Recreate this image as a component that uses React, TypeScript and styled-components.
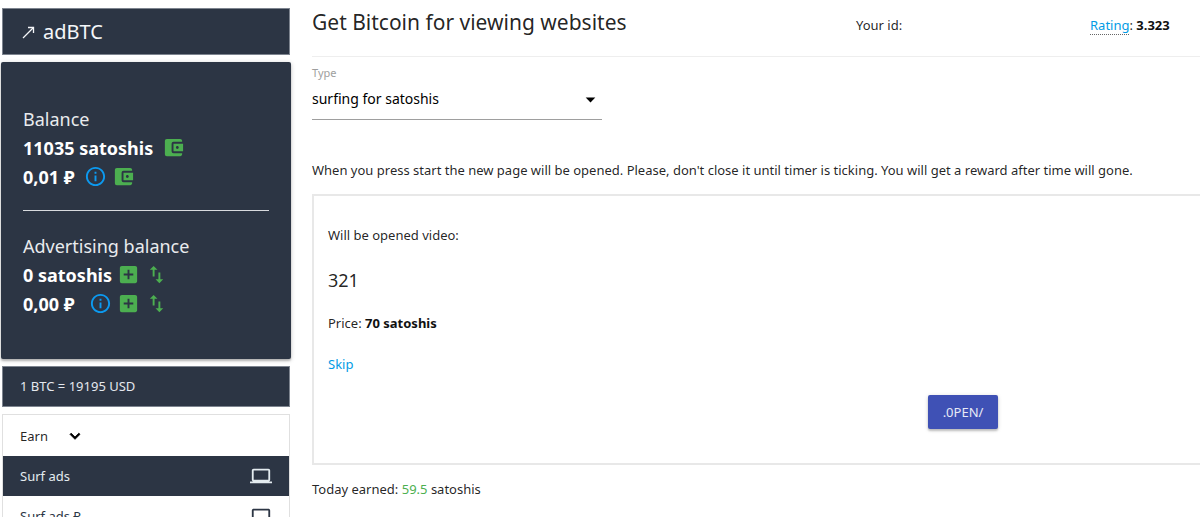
import React from "react";
import styled, { createGlobalStyle } from "styled-components";
import {
  MdAccountBalanceWallet,
  MdAddBox,
  MdArrowDropDown,
  MdExpandMore,
  MdImportExport,
  MdInfoOutline,
  MdLaptop,
} from "react-icons/md";

const navy = "#2c3544";
const green = "#4caf50";
const blue = "#039be5";

const GlobalStyle = createGlobalStyle`
  * { box-sizing: border-box; }
  body {
    margin: 0;
    background: #fff;
    color: rgba(0, 0, 0, 0.87);
    font-family: "Noto Sans", "Open Sans", sans-serif;
    font-size: 13px;
    line-height: 20px;
  }
  h1, h2, h3, p { margin: 0; padding: 0; font-weight: 400; }
  a { color: ${blue}; text-decoration: none; }
`;

const Page = styled.div`
  display: flex;
  gap: 21px;
  height: 100vh;
  overflow: hidden;
`;

const Sidebar = styled.aside`
  flex: 0 0 291px;
  display: flex;
  flex-direction: column;
  gap: 7px;
  padding: 8px 0 0 1px;
`;

const Panel = styled.div`
  flex: none;
  display: flex;
  align-items: center;
  margin: 0 1px;
  padding: 0 17px;
  border: 1px solid #7d848f;
  background: ${navy};
  color: #e4e8ee;
`;

const Logo = styled.a`
  display: flex;
  align-items: center;
  gap: 7px;
  height: 45px;
  color: #f5f7fa;
  font-size: 20px;
`;

const Rate = styled.p`
  line-height: 39px;
`;

const BalanceCard = styled.section`
  flex: none;
  padding: 43px 22px 41px;
  border-radius: 2px;
  background: ${navy};
  color: #fff;
  box-shadow: 0 2px 2px rgba(0, 0, 0, 0.2), 0 1px 5px rgba(0, 0, 0, 0.2);
`;

const BalanceTitle = styled.h2`
  color: #e9ebee;
  font-size: 18px;
  line-height: 28px;
`;

const BalanceRow = styled.div`
  display: flex;
  align-items: center;
  height: 29px;
  font-size: 18px;
  font-weight: 700;
`;

const IconLink = styled.a<{ $tone?: string; $gap?: number }>`
  display: flex;
  margin-left: ${(p) => p.$gap ?? 5}px;
  color: ${(p) => p.$tone ?? green};
  font-size: 23px;
`;

const Divider = styled.hr`
  margin: 19px 0 21px;
  border: 0;
  border-top: 1px solid #d8dade;
`;

const Menu = styled.nav`
  flex: none;
  margin: 0 1px;
  border: 1px solid #e0e0e0;
`;

const MenuToggle = styled.button`
  display: flex;
  align-items: center;
  gap: 17px;
  width: 100%;
  height: 41px;
  padding: 0 17px;
  border: 0;
  background: #fff;
  color: rgba(0, 0, 0, 0.87);
  font: inherit;

  svg { font-size: 20px; color: #000; }
  path:not([fill="none"]) { stroke: currentColor; stroke-width: 1; }
`;

const MenuLink = styled.a<{ $active?: boolean }>`
  display: flex;
  align-items: center;
  justify-content: space-between;
  height: 40px;
  padding: 0 17px;
  background: ${(p) => (p.$active ? navy : "#fff")};
  color: ${(p) => (p.$active ? "#e4ecf0" : navy)};

  svg { font-size: 22px; }
`;

const Main = styled.main`
  flex: 1;
  min-width: 0;
`;

const Header = styled.header`
  display: grid;
  grid-template-columns: 544fr 234fr 110fr;
  height: 57px;
  padding-top: 6px;
  border-bottom: 1px solid #eee;
`;

const Title = styled.h1`
  font-size: 21px;
  line-height: 32px;
`;

const HeaderItem = styled.p`
  padding-top: 9px;
  white-space: nowrap;
`;

const RatingLink = styled.a`
  border-bottom: 1px dotted #666;
`;

const Strong = styled.strong`
  color: #111;
  font-weight: 700;
`;

const Field = styled.div`
  width: 290px;
  padding-top: 8px;
`;

const FieldLabel = styled.label`
  display: block;
  color: #9e9e9e;
  font-size: 11px;
  line-height: 16px;
`;

const SelectBox = styled.div`
  display: grid;
  align-items: center;
  height: 39px;
  border-bottom: 1px solid #9e9e9e;

  > * { grid-area: 1 / 1; }
  svg { justify-self: end; margin-bottom: 2px; font-size: 23px; color: #000; pointer-events: none; }
`;

const Select = styled.select`
  width: 100%;
  height: 100%;
  padding: 0 0 2px;
  border: 0;
  appearance: none;
  background: transparent;
  color: #000;
  font: inherit;
  font-size: 14px;
`;

const Intro = styled.p`
  padding: 40px 0 14px;
  white-space: nowrap;
`;

const Offer = styled.section`
  display: flex;
  flex-direction: column;
  align-items: flex-start;
  min-height: 271px;
  padding: 29px 14px;
  border: 2px solid #e8e8e8;
  border-right: 0;
`;

const OfferTitle = styled.h3`
  padding: 20px 0 18px;
  font-size: 18px;
  line-height: 30px;
`;

const Skip = styled.a`
  margin: 21px 0;
`;

const OpenButton = styled.button`
  align-self: center;
  width: 70px;
  height: 34px;
  margin-left: 412px;
  padding: 0;
  border: 0;
  border-radius: 2px;
  background: #3f51b5;
  color: #e8eaf6;
  font: inherit;
  box-shadow: 0 2px 2px rgba(0, 0, 0, 0.18), 0 1px 4px rgba(0, 0, 0, 0.16);
`;

const Earned = styled.p`
  padding-top: 14px;

  span { color: ${green}; }
`;

export default function App() {
  return (
    <>
      <GlobalStyle />
      <Page>
        <Sidebar>
          <Panel>
            <Logo href="#">
              <svg width="16" height="16" viewBox="0 0 16 16" fill="none" stroke="currentColor" aria-hidden="true">
                <path d="M3 14L13.5 3.5" strokeWidth="1.3" />
                <path d="M8 3.5h5.5V9" strokeWidth="1.3" />
              </svg>
              adBTC
            </Logo>
          </Panel>
          <BalanceCard>
            <BalanceTitle>Balance</BalanceTitle>
            <BalanceRow>
              11035 satoshis
              <IconLink href="#" $gap={9} aria-label="Withdraw satoshis"><MdAccountBalanceWallet /></IconLink>
            </BalanceRow>
            <BalanceRow>
              0,01 ₽
              <IconLink href="#" $tone="#0c9af0" $gap={9} aria-label="Balance info"><MdInfoOutline /></IconLink>
              <IconLink href="#" aria-label="Withdraw rubles"><MdAccountBalanceWallet /></IconLink>
            </BalanceRow>
            <Divider />
            <BalanceTitle>Advertising balance</BalanceTitle>
            <BalanceRow>
              0 satoshis
              <IconLink href="#" aria-label="Add satoshis"><MdAddBox /></IconLink>
              <IconLink href="#" aria-label="Transfer satoshis"><MdImportExport /></IconLink>
            </BalanceRow>
            <BalanceRow>
              0,00 ₽
              <IconLink href="#" $tone="#0c9af0" $gap={14} aria-label="Advertising balance info"><MdInfoOutline /></IconLink>
              <IconLink href="#" aria-label="Add rubles"><MdAddBox /></IconLink>
              <IconLink href="#" aria-label="Transfer rubles"><MdImportExport /></IconLink>
            </BalanceRow>
          </BalanceCard>
          <Panel>
            <Rate>1 BTC = 19195 USD</Rate>
          </Panel>
          <Menu>
            <MenuToggle>Earn <MdExpandMore /></MenuToggle>
            <MenuLink href="#" $active>Surf ads <MdLaptop /></MenuLink>
            <MenuLink href="#">Surf ads ₽ <MdLaptop /></MenuLink>
          </Menu>
        </Sidebar>
        <Main>
          <Header>
            <Title>Get Bitcoin for viewing websites</Title>
            <HeaderItem>Your id:</HeaderItem>
            <HeaderItem><RatingLink href="#">Rating</RatingLink>: <Strong>3.323</Strong></HeaderItem>
          </Header>
          <Field>
            <FieldLabel htmlFor="type">Type</FieldLabel>
            <SelectBox>
              <Select id="type"><option>surfing for satoshis</option></Select>
              <MdArrowDropDown />
            </SelectBox>
          </Field>
          <Intro>
            When you press start the new page will be opened. Please, don't close it until timer is ticking. You will get a reward after time will gone.
          </Intro>
          <Offer>
            <p>Will be opened video:</p>
            <OfferTitle>321</OfferTitle>
            <p>Price: <Strong>70 satoshis</Strong></p>
            <Skip href="#">Skip</Skip>
            <OpenButton>.0PEN/</OpenButton>
          </Offer>
          <Earned>Today earned: <span>59.5</span> satoshis</Earned>
        </Main>
      </Page>
    </>
  );
}
